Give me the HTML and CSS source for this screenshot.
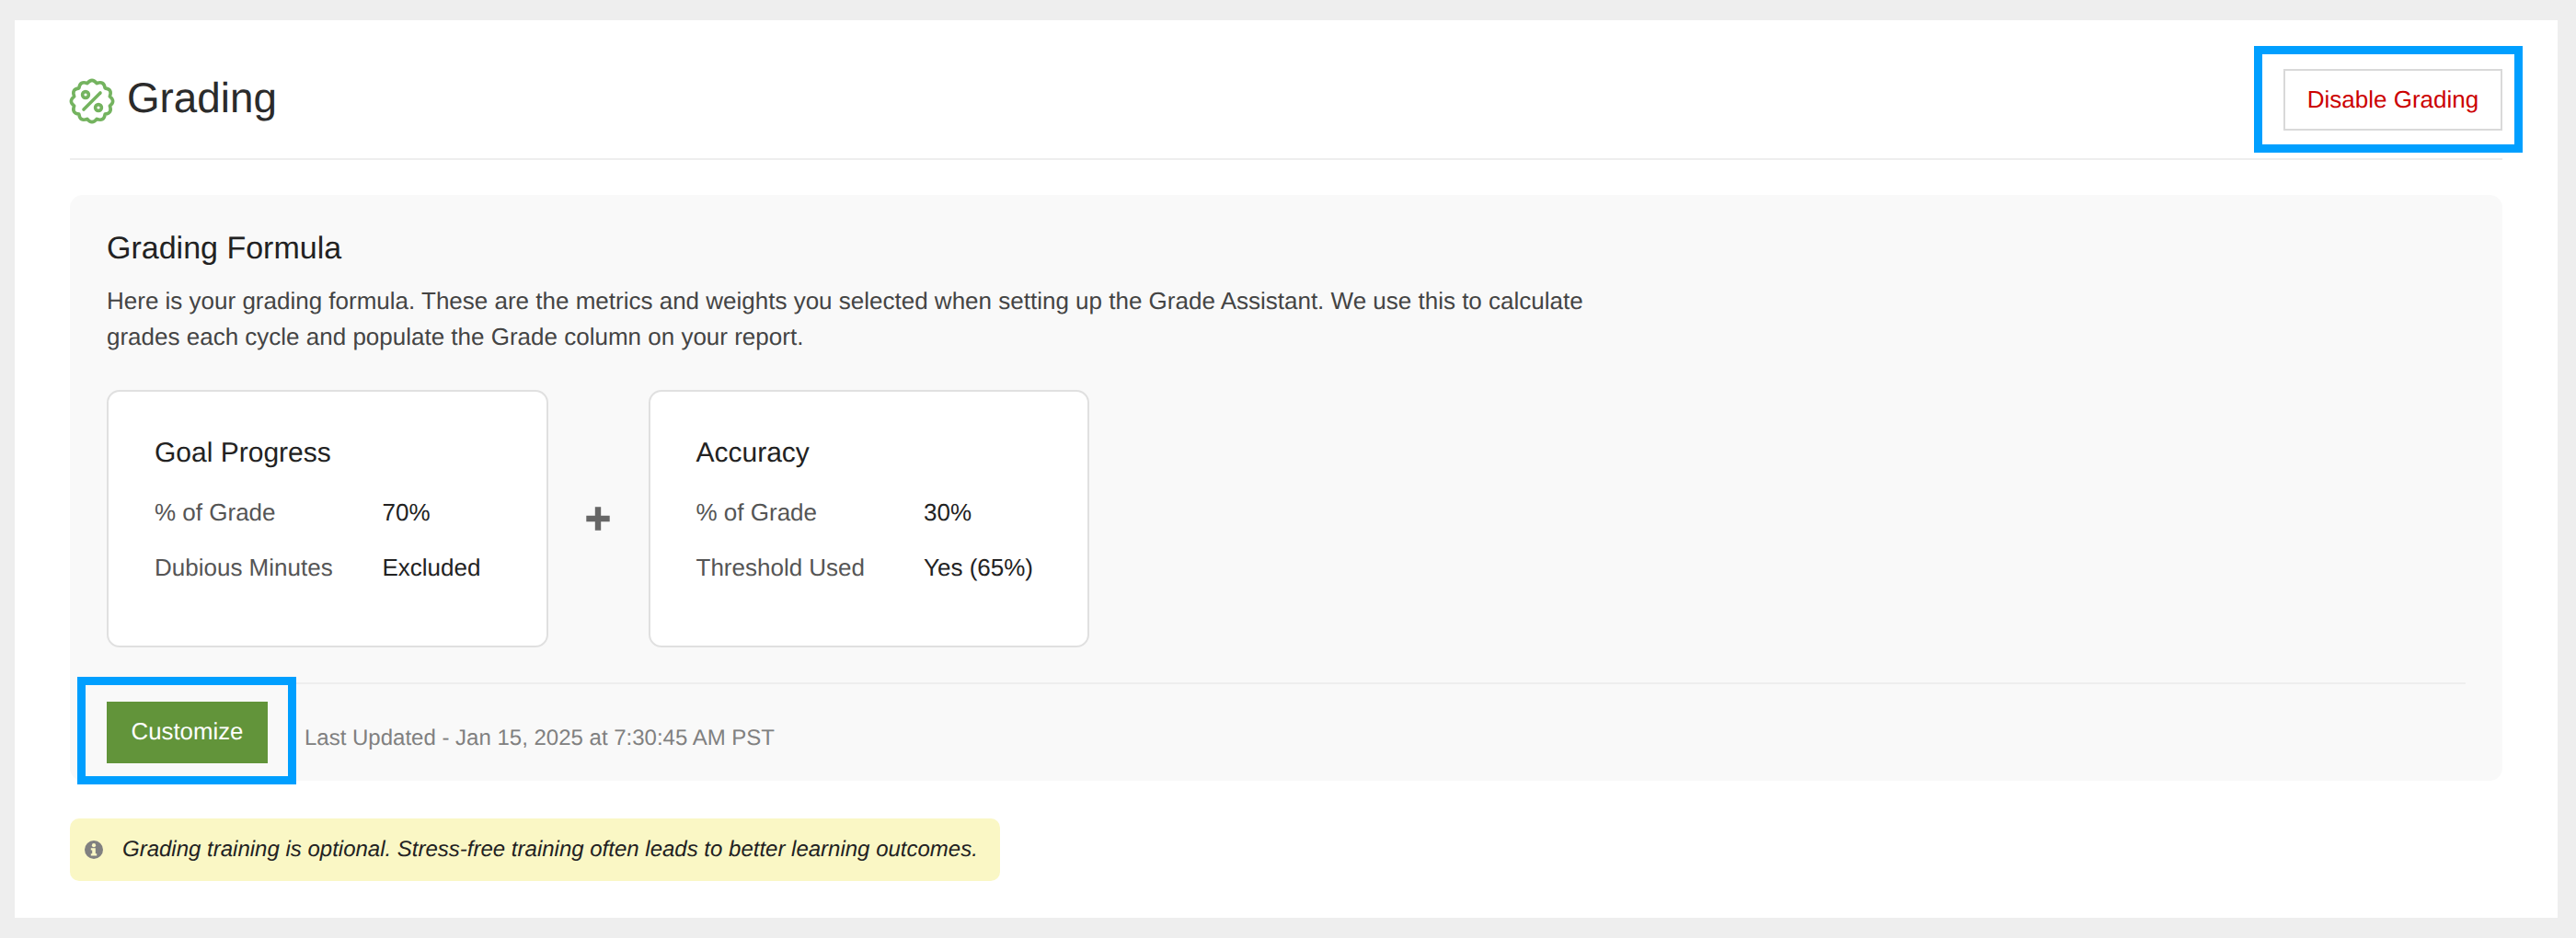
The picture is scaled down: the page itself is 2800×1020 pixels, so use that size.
FILE: index.html
```html
<!DOCTYPE html>
<html lang="en">
<head>
  <meta charset="UTF-8">
  <title>Grading</title>
  <link rel="stylesheet" href="styles.css">
</head>
<body>
  <div class="panel">
    <header class="page-header">
      <div class="page-title">
        <svg class="title-icon" viewBox="0 0 48 48" fill="none" stroke="#74b35f" stroke-width="3.6" stroke-linecap="round" stroke-linejoin="round">
          <path d="M18.82 4.68Q24 -2 29.18 4.68Q37 1.5 38.14 9.86Q46.5 11 43.32 18.82Q50 24 43.32 29.18Q46.5 37 38.14 38.14Q37 46.5 29.18 43.32Q24 50 18.82 43.32Q11 46.5 9.86 38.14Q1.5 37 4.68 29.18Q-2 24 4.68 18.82Q1.5 11 9.86 9.86Q11 1.5 18.82 4.68Z"/>
          <circle cx="17" cy="17" r="3.4"/>
          <circle cx="31" cy="31" r="3.4"/>
          <path d="M15 33 33 15"/>
        </svg>
        <h1>Grading</h1>
      </div>
      <div class="highlight highlight-disable">
        <button class="btn-disable">Disable Grading</button>
      </div>
    </header>

    <section class="formula">
      <h2>Grading Formula</h2>
      <p class="formula-desc">Here is your grading formula. These are the metrics and weights you selected when setting up the Grade Assistant. We use this to calculate grades each cycle and populate the Grade column on your report.</p>

      <div class="metrics">
        <div class="metric-card">
          <h3>Goal Progress</h3>
          <div class="metric-rows">
            <span class="metric-label">% of Grade</span>
            <span class="metric-value">70%</span>
            <span class="metric-label">Dubious Minutes</span>
            <span class="metric-value">Excluded</span>
          </div>
        </div>
        <div class="metric-plus">
          <svg class="plus-icon" viewBox="0 0 26 26" fill="#666">
            <path d="M9.800 .3h6.400v9.500h9.500v6.400h-9.500v9.500H9.800v-9.500H.3V9.800h9.500z"/>
          </svg>
        </div>
        <div class="metric-card">
          <h3>Accuracy</h3>
          <div class="metric-rows">
            <span class="metric-label">% of Grade</span>
            <span class="metric-value">30%</span>
            <span class="metric-label">Threshold Used</span>
            <span class="metric-value">Yes (65%)</span>
          </div>
        </div>
      </div>

      <div class="formula-footer">
        <div class="highlight highlight-customize">
          <button class="btn-customize">Customize</button>
        </div>
        <span class="last-updated">Last Updated - Jan 15, 2025 at 7:30:45 AM PST</span>
      </div>
    </section>

    <div class="notice">
      <svg class="notice-icon" viewBox="0 0 20 20">
        <circle cx="10" cy="10" r="10" fill="#808080"/>
        <circle cx="10" cy="5.2" r="2.1" fill="#faf7c5"/>
        <path d="M6.800 8.200h5v6h1.400v2.400H6.800v-2.400h1.400v-3.600H6.800z" fill="#faf7c5"/>
      </svg>
      <em>Grading training is optional. Stress-free training often leads to better learning outcomes.</em>
    </div>
  </div>
</body>
</html>
```

FILE: styles.css
```css
* { box-sizing: border-box; }
body {
  margin: 0;
  padding: 22px 20px 22px 16px;
  background: #eee;
  font-family: "Liberation Sans", Arial, sans-serif;
  color: #222;
  text-rendering: geometricPrecision;
}
button { text-rendering: geometricPrecision; }
.panel {
  background: white;
  padding: 0 60px 40px;
  height: 976px;
}

/* header */
.page-header {
  display: flex;
  justify-content: space-between;
  align-items: center;
  padding: 53px 0 30px;
  border-bottom: 2px solid #eee;
  height: 152px;
  margin-bottom: 38px;
}
.page-title {
  display: flex;
  align-items: center;
  gap: 14px;
}
.page-title h1 {
  margin: 0 0 3px;
  font-size: 45.8px;
  font-weight: normal;
  line-height: 56px;
  color: #2b2b2b;
}
.title-icon { width: 48px; height: 48px; margin-top: 3px; overflow: visible; }
.highlight { position: relative; }
.highlight::after {
  content: "";
  position: absolute;
  border: 9px solid #009fff;
  pointer-events: none;
}
.highlight-disable::after { top: -25px; right: -22px; bottom: -24px; left: -32px; }
.highlight-customize::after { top: -27px; right: -31px; bottom: -23px; left: -32px; }
.btn-disable {
  display: block;
  width: 238px;
  height: 67px;
  padding: 0;
  background: white;
  border: 2px solid #d9d9d9;
  color: #cc0000;
  font-family: inherit;
  font-size: 26px;
}

/* formula section */
.formula {
  background: #f9f9f9;
  border-radius: 14px;
  padding: 40px 40px 19px;
}
.formula h2 {
  margin: 0;
  font-size: 34px;
  line-height: 37px;
  font-weight: normal;
  color: #222;
}
.formula-desc {
  margin: 19px 0 38px;
  max-width: 1640px;
  font-size: 26px;
  line-height: 39px;
  color: #444;
}
.metrics {
  display: flex;
  align-items: center;
}
.metric-card {
  width: 479.500px;
  height: 280px;
  background: white;
  border: 2px solid #e0e0e0;
  border-radius: 14px;
  padding: 49px 50px 0;
}
.metric-card h3 {
  margin: 0 0 28px;
  font-size: 30px;
  line-height: 36px;
  font-weight: normal;
  color: #222;
}
.metric-rows {
  display: grid;
  grid-template-columns: 247.500px auto;
  row-gap: 24px;
  font-size: 26px;
  line-height: 36px;
}
.metric-label { color: #555; }
.metric-value { color: #222; }
.metric-plus {
  display: flex;
  justify-content: center;
  width: 109px;
}
.plus-icon { width: 26px; height: 26px; }
.formula-footer {
  display: flex;
  align-items: center;
  gap: 40px;
  margin-top: 38px;
  padding-top: 19px;
  border-top: 2px solid #eee;
}
.btn-customize {
  display: block;
  width: 175px;
  height: 67px;
  padding: 0;
  background: #62943a;
  border: none;
  color: white;
  font-family: inherit;
  font-size: 25.8px;
}
.last-updated {
  margin-top: 12px;
  font-size: 24px;
  color: #808080;
}

/* notice */
.notice {
  display: inline-flex;
  align-items: center;
  gap: 21px;
  height: 68px;
  margin-top: 41px;
  padding: 0 24px 0 16px;
  background: #faf7c5;
  border-radius: 10px;
  font-size: 24px;
  color: #222;
}
.notice-icon { width: 20px; height: 20px; flex: none; }
```
